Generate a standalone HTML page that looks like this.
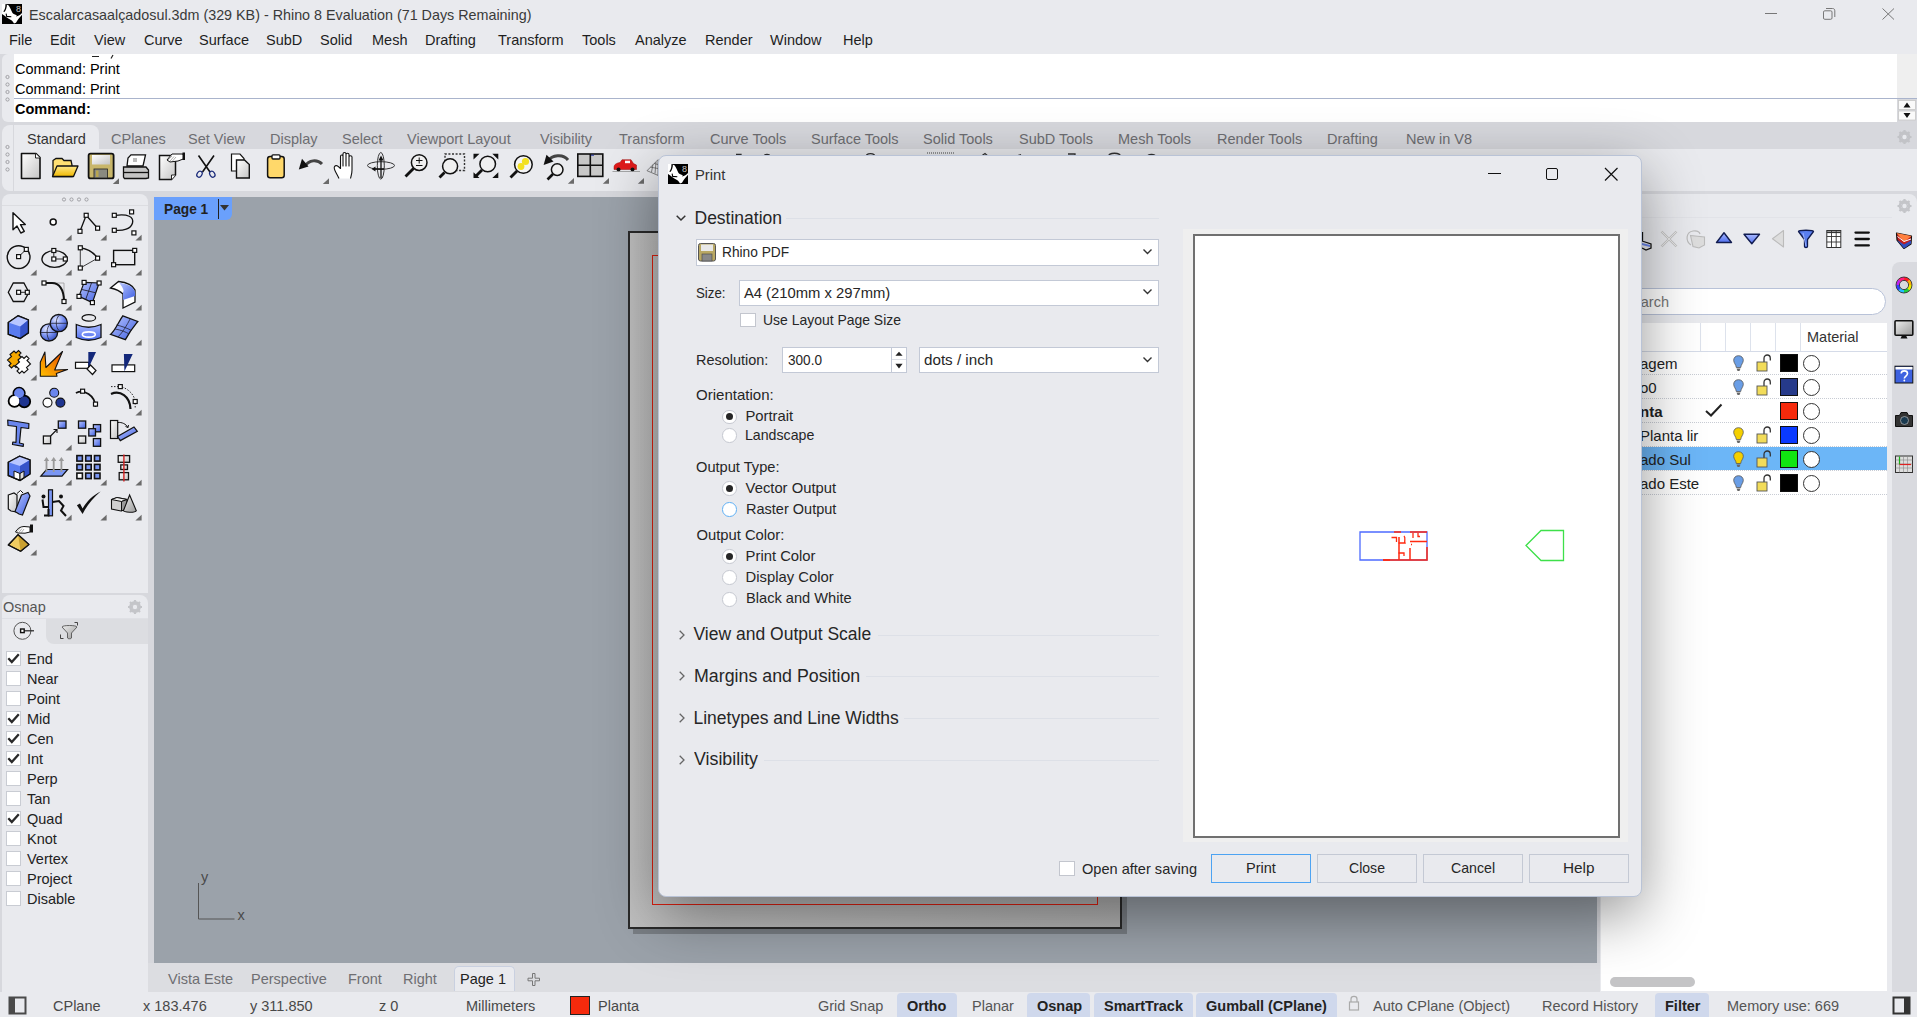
<!DOCTYPE html>
<html><head><meta charset="utf-8">
<style>
*{margin:0;padding:0;box-sizing:border-box}
html,body{width:1917px;height:1017px;overflow:hidden}
body{position:relative;background:#d7d8dd;font-family:"Liberation Sans",sans-serif;color:#1e1e1e;font-size:14.5px}
.a{position:absolute}
.t{position:absolute;white-space:nowrap;line-height:1}
.g{color:#6e6e72}
.b{font-weight:bold}
svg{position:absolute;overflow:visible}
</style></head><body>

<!-- ===== TITLE + MENU ===== -->
<div class="a" style="left:0;top:0;width:1917px;height:54px;background:#e9eaee"></div>
<div class="t" style="left:29px;top:8px;color:#3a3a3a;transform:scaleX(0.988);transform-origin:0 0">Escalarcasaalçadosul.3dm (329 KB) - Rhino 8 Evaluation (71 Days Remaining)</div>
<div id="menu">
<div class="t" style="left:9px;top:33px">File</div>
<div class="t" style="left:50px;top:33px">Edit</div>
<div class="t" style="left:94px;top:33px">View</div>
<div class="t" style="left:144px;top:33px">Curve</div>
<div class="t" style="left:199px;top:33px">Surface</div>
<div class="t" style="left:266px;top:33px">SubD</div>
<div class="t" style="left:320px;top:33px">Solid</div>
<div class="t" style="left:372px;top:33px">Mesh</div>
<div class="t" style="left:425px;top:33px">Drafting</div>
<div class="t" style="left:498px;top:33px">Transform</div>
<div class="t" style="left:582px;top:33px">Tools</div>
<div class="t" style="left:635px;top:33px">Analyze</div>
<div class="t" style="left:705px;top:33px">Render</div>
<div class="t" style="left:770px;top:33px">Window</div>
<div class="t" style="left:843px;top:33px">Help</div>
</div>

<!-- ===== COMMAND AREA ===== -->
<div class="a" style="left:2px;top:54px;width:14px;height:68px;background:#e9eaee;border-radius:6px 0 0 6px"></div>
<div class="a" style="left:14px;top:54px;width:1883px;height:68px;background:#fff"></div>
<div class="a" style="left:1897px;top:54px;width:20px;height:45px;background:#efefef"></div>
<div class="a" style="left:14px;top:98px;width:1903px;height:1px;background:#aab4cc"></div>
<div class="t" style="left:15px;top:62px;color:#000">Command: Print</div>
<div class="t" style="left:15px;top:82px;color:#000">Command: Print</div>
<div class="t b" style="left:15px;top:102px;color:#000">Command:</div>

<!-- ===== TOOLBAR ===== -->
<div class="a" style="left:2px;top:125px;width:1915px;height:66px;background:#e9eaee;border-radius:8px 0 0 8px"></div>
<div class="a" style="left:91px;top:125px;width:1826px;height:24px;background:#d7d8dd"></div>
<div class="a" style="left:14px;top:125px;width:85px;height:24px;background:#e9eaee;border-radius:0 8px 0 0"></div>
<div class="a" style="left:13px;top:125px;width:1px;height:66px;background:#d7d8dd"></div>
<div id="tabs">
<div class="t" style="left:27px;top:132px;color:#333">Standard</div>
<div class="t g" style="left:111px;top:132px">CPlanes</div>
<div class="t g" style="left:188px;top:132px">Set View</div>
<div class="t g" style="left:270px;top:132px">Display</div>
<div class="t g" style="left:342px;top:132px">Select</div>
<div class="t g" style="left:407px;top:132px">Viewport Layout</div>
<div class="t g" style="left:540px;top:132px">Visibility</div>
<div class="t g" style="left:619px;top:132px">Transform</div>
<div class="t g" style="left:710px;top:132px">Curve Tools</div>
<div class="t g" style="left:811px;top:132px">Surface Tools</div>
<div class="t g" style="left:923px;top:132px">Solid Tools</div>
<div class="t g" style="left:1019px;top:132px">SubD Tools</div>
<div class="t g" style="left:1118px;top:132px">Mesh Tools</div>
<div class="t g" style="left:1217px;top:132px">Render Tools</div>
<div class="t g" style="left:1327px;top:132px">Drafting</div>
<div class="t g" style="left:1406px;top:132px">New in V8</div>
</div>

<!-- ===== LEFT PANELS ===== -->
<div class="a" style="left:2px;top:194px;width:146px;height:399px;background:#e9eaee;border-radius:8px 8px 0 0"></div>
<div class="a" style="left:2px;top:205px;width:146px;height:1px;background:#dcdde1"></div>
<div class="a" style="left:2px;top:595px;width:146px;height:397px;background:#e9eaee;border-radius:8px 8px 0 0"></div>
<div class="t" style="left:3px;top:599.5px;color:#555">Osnap</div>
<div class="a" style="left:2px;top:618px;width:146px;height:1px;background:#dfe0e5"></div>
<div class="a" style="left:2px;top:619px;width:46px;height:25px;background:#e9eaee;border-radius:0 8px 0 0"></div>
<div class="a" style="left:46px;top:619px;width:102px;height:25px;background:#dcdde1;border-radius:0 0 0 8px"></div>
<div id="osnap">
<div class="a" style="left:6px;top:651px;width:15px;height:15px;background:#fff;border:1px solid #c9ccd3"></div>
<svg style="left:6px;top:651px" width="15" height="15"><path d="M2.3 7.2L5.8 11L12.8 3.2" fill="none" stroke="#2a2a2a" stroke-width="2.3"/></svg>
<div class="t" style="left:27px;top:652px;color:#222">End</div>
<div class="a" style="left:6px;top:671px;width:15px;height:15px;background:#fff;border:1px solid #c9ccd3"></div>
<div class="t" style="left:27px;top:672px;color:#222">Near</div>
<div class="a" style="left:6px;top:691px;width:15px;height:15px;background:#fff;border:1px solid #c9ccd3"></div>
<div class="t" style="left:27px;top:692px;color:#222">Point</div>
<div class="a" style="left:6px;top:711px;width:15px;height:15px;background:#fff;border:1px solid #c9ccd3"></div>
<svg style="left:6px;top:711px" width="15" height="15"><path d="M2.3 7.2L5.8 11L12.8 3.2" fill="none" stroke="#2a2a2a" stroke-width="2.3"/></svg>
<div class="t" style="left:27px;top:712px;color:#222">Mid</div>
<div class="a" style="left:6px;top:731px;width:15px;height:15px;background:#fff;border:1px solid #c9ccd3"></div>
<svg style="left:6px;top:731px" width="15" height="15"><path d="M2.3 7.2L5.8 11L12.8 3.2" fill="none" stroke="#2a2a2a" stroke-width="2.3"/></svg>
<div class="t" style="left:27px;top:732px;color:#222">Cen</div>
<div class="a" style="left:6px;top:751px;width:15px;height:15px;background:#fff;border:1px solid #c9ccd3"></div>
<svg style="left:6px;top:751px" width="15" height="15"><path d="M2.3 7.2L5.8 11L12.8 3.2" fill="none" stroke="#2a2a2a" stroke-width="2.3"/></svg>
<div class="t" style="left:27px;top:752px;color:#222">Int</div>
<div class="a" style="left:6px;top:771px;width:15px;height:15px;background:#fff;border:1px solid #c9ccd3"></div>
<div class="t" style="left:27px;top:772px;color:#222">Perp</div>
<div class="a" style="left:6px;top:791px;width:15px;height:15px;background:#fff;border:1px solid #c9ccd3"></div>
<div class="t" style="left:27px;top:792px;color:#222">Tan</div>
<div class="a" style="left:6px;top:811px;width:15px;height:15px;background:#fff;border:1px solid #c9ccd3"></div>
<svg style="left:6px;top:811px" width="15" height="15"><path d="M2.3 7.2L5.8 11L12.8 3.2" fill="none" stroke="#2a2a2a" stroke-width="2.3"/></svg>
<div class="t" style="left:27px;top:812px;color:#222">Quad</div>
<div class="a" style="left:6px;top:831px;width:15px;height:15px;background:#fff;border:1px solid #c9ccd3"></div>
<div class="t" style="left:27px;top:832px;color:#222">Knot</div>
<div class="a" style="left:6px;top:851px;width:15px;height:15px;background:#fff;border:1px solid #c9ccd3"></div>
<div class="t" style="left:27px;top:852px;color:#222">Vertex</div>
<div class="a" style="left:6px;top:871px;width:15px;height:15px;background:#fff;border:1px solid #c9ccd3"></div>
<div class="t" style="left:27px;top:872px;color:#222">Project</div>
<div class="a" style="left:6px;top:891px;width:15px;height:15px;background:#fff;border:1px solid #c9ccd3"></div>
<div class="t" style="left:27px;top:892px;color:#222">Disable</div>
</div>

<!-- ===== VIEWPORT ===== -->
<div class="a" style="left:154px;top:197px;width:1443px;height:766px;background:#9ba2aa;overflow:hidden">
  <div class="a" style="left:474px;top:34px;width:494px;height:698px;background:linear-gradient(90deg,#c0c0c0,#b2b2b2);border:2px solid #2a2a2a;box-shadow:5px 5px 0 rgba(0,0,0,0.22)"></div>
  <div class="a" style="left:498px;top:58px;width:446px;height:650px;border:1px solid #e02010"></div>
</div>
<div class="a" style="left:154px;top:197px;width:78px;height:23px;background:#6aa0fc;border-radius:0 0 6px 0"></div>
<div class="t b" style="left:163.5px;top:201px;color:#222;font-size:15px;transform:scaleX(0.915);transform-origin:0 0">Page 1</div>

<!-- viewport tab strip -->
<div class="a" style="left:148px;top:963px;width:1452px;height:29px;background:#dcdde1"></div>
<div class="a" style="left:454px;top:966px;width:61px;height:25px;background:#e9eaee;border-radius:5px 5px 0 0;border:1px solid #c9d0e0;border-bottom:none"></div>
<div class="t g" style="left:168px;top:972px">Vista Este</div>
<div class="t g" style="left:251px;top:972px">Perspective</div>
<div class="t g" style="left:348px;top:972px">Front</div>
<div class="t g" style="left:403px;top:972px">Right</div>
<div class="t" style="left:460px;top:972px;color:#222">Page 1</div>

<!-- ===== STATUS BAR ===== -->
<div class="a" style="left:0;top:992px;width:1917px;height:25px;background:#e9eaee"></div>
<div id="status">
<div class="t" style="left:53px;top:999px;color:#484848">CPlane</div>
<div class="t" style="left:143px;top:999px;color:#484848">x 183.476</div>
<div class="t" style="left:250px;top:999px;color:#484848">y 311.850</div>
<div class="t" style="left:379px;top:999px;color:#484848">z 0</div>
<div class="t" style="left:466px;top:999px;color:#484848">Millimeters</div>
<div class="a" style="left:570px;top:996px;width:20px;height:19px;background:#f52a0c;border:1px solid #222"></div>
<div class="t" style="left:598px;top:999px;color:#484848">Planta</div>
<div class="t" style="left:818px;top:999px;color:#555">Grid Snap</div>
<div class="a" style="left:897px;top:993px;width:60px;height:24px;background:#cfd8ec;border-radius:4px 4px 0 0"></div>
<div class="t b" style="left:907px;top:999px;color:#222">Ortho</div>
<div class="t" style="left:972px;top:999px;color:#555">Planar</div>
<div class="a" style="left:1027px;top:993px;width:63px;height:24px;background:#cfd8ec;border-radius:4px 4px 0 0"></div>
<div class="t b" style="left:1037px;top:999px;color:#222">Osnap</div>
<div class="a" style="left:1094px;top:993px;width:99px;height:24px;background:#cfd8ec;border-radius:4px 4px 0 0"></div>
<div class="t b" style="left:1104px;top:999px;color:#222">SmartTrack</div>
<div class="a" style="left:1196px;top:993px;width:141px;height:24px;background:#cfd8ec;border-radius:4px 4px 0 0"></div>
<div class="t b" style="left:1206px;top:999px;color:#222">Gumball (CPlane)</div>
<div class="t" style="left:1373px;top:999px;color:#555">Auto CPlane (Object)</div>
<div class="t" style="left:1542px;top:999px;color:#555">Record History</div>
<div class="a" style="left:1655px;top:993px;width:54px;height:24px;background:#cfd8ec;border-radius:4px 4px 0 0"></div>
<div class="t b" style="left:1665px;top:999px;color:#222">Filter</div>
<div class="t" style="left:1727px;top:999px;color:#555">Memory use: 669</div>
</div>

<!-- ===== RIGHT PANEL ===== -->
<div class="a" style="left:1600px;top:194px;width:317px;height:798px;background:#e9eaee;border-radius:8px 8px 0 0"></div>
<div class="a" style="left:1600px;top:217px;width:317px;height:1px;background:#e2e3e8"></div>
<div class="a" style="left:1892px;top:262px;width:25px;height:730px;background:#d9dadf;border-radius:8px 0 0 0"></div>
<div class="a" style="left:1892px;top:217px;width:25px;height:45px;background:#e9eaee;border-radius:0 0 8px 0"></div>
<div class="a" style="left:1601px;top:288px;width:285px;height:27px;background:#fff;border:1px solid #b8c2d8;border-radius:14px"></div>
<div class="t" style="left:1623px;top:295px;color:#777">Search</div>
<div class="a" style="left:1601px;top:323px;width:286px;height:668px;background:#fff"></div>
<div class="a" style="left:1601px;top:351px;width:286px;height:1px;background:#d5dbe8"></div>
<div class="a" style="left:1700px;top:323px;width:1px;height:28px;background:#dde2ec"></div>
<div class="a" style="left:1725px;top:323px;width:1px;height:28px;background:#dde2ec"></div>
<div class="a" style="left:1750px;top:323px;width:1px;height:28px;background:#dde2ec"></div>
<div class="a" style="left:1775px;top:323px;width:1px;height:28px;background:#dde2ec"></div>
<div class="a" style="left:1800px;top:323px;width:1px;height:28px;background:#dde2ec"></div>
<div class="t" style="left:1807px;top:330px;color:#333">Material</div>
<div class="a" style="left:1601px;top:374px;width:286px;height:1px;border-top:1px dotted #c8ccd4"></div>
<div class="t" style="left:1640px;top:356px;color:#222;font-size:15px">agem</div>
<div class="a" style="left:1780px;top:354px;width:18px;height:18px;background:#000;border:1.5px solid #111"></div>
<div class="a" style="left:1803px;top:355px;width:17px;height:17px;border-radius:50%;background:#fff;border:1.2px solid #333"></div>
<svg style="left:1733px;top:355px" width="11" height="17"><path d="M5.5 0.7C2.5 0.7 0.7 2.8 0.7 5.3C0.7 8 3 9.5 3.3 12.5H7.7C8 9.5 10.3 8 10.3 5.3C10.3 2.8 8.5 0.7 5.5 0.7Z" fill="#6a9ee6" stroke="#555" stroke-width="0.8"/><path d="M3.5 13.5H7.5L6.5 16H4.5Z" fill="#666"/></svg>
<svg style="left:1756px;top:354px" width="16" height="18"><path d="M8 8V4.5C8 2.5 9.5 1 11.2 1C13 1 14.3 2.5 14.3 4.5V6.5" fill="none" stroke="#333" stroke-width="1.3"/><rect x="1" y="8" width="10" height="9" fill="#f2dc5a" stroke="#555" stroke-width="0.9"/></svg>
<div class="a" style="left:1601px;top:398px;width:286px;height:1px;border-top:1px dotted #c8ccd4"></div>
<div class="t" style="left:1640px;top:380px;color:#222;font-size:15px">o0</div>
<div class="a" style="left:1780px;top:378px;width:18px;height:18px;background:#263a8a;border:1.5px solid #111"></div>
<div class="a" style="left:1803px;top:379px;width:17px;height:17px;border-radius:50%;background:#fff;border:1.2px solid #333"></div>
<svg style="left:1733px;top:379px" width="11" height="17"><path d="M5.5 0.7C2.5 0.7 0.7 2.8 0.7 5.3C0.7 8 3 9.5 3.3 12.5H7.7C8 9.5 10.3 8 10.3 5.3C10.3 2.8 8.5 0.7 5.5 0.7Z" fill="#6a9ee6" stroke="#555" stroke-width="0.8"/><path d="M3.5 13.5H7.5L6.5 16H4.5Z" fill="#666"/></svg>
<svg style="left:1756px;top:378px" width="16" height="18"><path d="M8 8V4.5C8 2.5 9.5 1 11.2 1C13 1 14.3 2.5 14.3 4.5V6.5" fill="none" stroke="#333" stroke-width="1.3"/><rect x="1" y="8" width="10" height="9" fill="#f2dc5a" stroke="#555" stroke-width="0.9"/></svg>
<div class="a" style="left:1601px;top:422px;width:286px;height:1px;border-top:1px dotted #c8ccd4"></div>
<div class="t b" style="left:1640px;top:404px;color:#222;font-size:15px">nta</div>
<div class="a" style="left:1780px;top:402px;width:18px;height:18px;background:#f52a0c;border:1.5px solid #111"></div>
<div class="a" style="left:1803px;top:403px;width:17px;height:17px;border-radius:50%;background:#fff;border:1.2px solid #333"></div>
<div class="a" style="left:1601px;top:446px;width:286px;height:1px;border-top:1px dotted #c8ccd4"></div>
<div class="t" style="left:1640px;top:428px;color:#222;font-size:15px"> Planta lir</div>
<div class="a" style="left:1780px;top:426px;width:18px;height:18px;background:#0a3aff;border:1.5px solid #111"></div>
<div class="a" style="left:1803px;top:427px;width:17px;height:17px;border-radius:50%;background:#fff;border:1.2px solid #333"></div>
<svg style="left:1733px;top:427px" width="11" height="17"><path d="M5.5 0.7C2.5 0.7 0.7 2.8 0.7 5.3C0.7 8 3 9.5 3.3 12.5H7.7C8 9.5 10.3 8 10.3 5.3C10.3 2.8 8.5 0.7 5.5 0.7Z" fill="#f5d000" stroke="#555" stroke-width="0.8"/><path d="M3.5 13.5H7.5L6.5 16H4.5Z" fill="#666"/></svg>
<svg style="left:1756px;top:426px" width="16" height="18"><path d="M8 8V4.5C8 2.5 9.5 1 11.2 1C13 1 14.3 2.5 14.3 4.5V6.5" fill="none" stroke="#333" stroke-width="1.3"/><rect x="1" y="8" width="10" height="9" fill="#f2dc5a" stroke="#555" stroke-width="0.9"/></svg>
<div class="a" style="left:1601px;top:447px;width:286px;height:23px;background:#6cb6f7"></div>
<div class="a" style="left:1601px;top:470px;width:286px;height:1px;border-top:1px dotted #c8ccd4"></div>
<div class="t" style="left:1640px;top:452px;color:#222;font-size:15px">ado Sul</div>
<div class="a" style="left:1780px;top:450px;width:18px;height:18px;background:#11e611;border:1.5px solid #111"></div>
<div class="a" style="left:1803px;top:451px;width:17px;height:17px;border-radius:50%;background:#fff;border:1.2px solid #333"></div>
<svg style="left:1733px;top:451px" width="11" height="17"><path d="M5.5 0.7C2.5 0.7 0.7 2.8 0.7 5.3C0.7 8 3 9.5 3.3 12.5H7.7C8 9.5 10.3 8 10.3 5.3C10.3 2.8 8.5 0.7 5.5 0.7Z" fill="#f5d000" stroke="#555" stroke-width="0.8"/><path d="M3.5 13.5H7.5L6.5 16H4.5Z" fill="#666"/></svg>
<svg style="left:1756px;top:450px" width="16" height="18"><path d="M8 8V4.5C8 2.5 9.5 1 11.2 1C13 1 14.3 2.5 14.3 4.5V6.5" fill="none" stroke="#333" stroke-width="1.3"/><rect x="1" y="8" width="10" height="9" fill="#f2dc5a" stroke="#555" stroke-width="0.9"/></svg>
<div class="a" style="left:1601px;top:494px;width:286px;height:1px;border-top:1px dotted #c8ccd4"></div>
<div class="t" style="left:1640px;top:476px;color:#222;font-size:15px">ado Este</div>
<div class="a" style="left:1780px;top:474px;width:18px;height:18px;background:#000;border:1.5px solid #111"></div>
<div class="a" style="left:1803px;top:475px;width:17px;height:17px;border-radius:50%;background:#fff;border:1.2px solid #333"></div>
<svg style="left:1733px;top:475px" width="11" height="17"><path d="M5.5 0.7C2.5 0.7 0.7 2.8 0.7 5.3C0.7 8 3 9.5 3.3 12.5H7.7C8 9.5 10.3 8 10.3 5.3C10.3 2.8 8.5 0.7 5.5 0.7Z" fill="#6a9ee6" stroke="#555" stroke-width="0.8"/><path d="M3.5 13.5H7.5L6.5 16H4.5Z" fill="#666"/></svg>
<svg style="left:1756px;top:474px" width="16" height="18"><path d="M8 8V4.5C8 2.5 9.5 1 11.2 1C13 1 14.3 2.5 14.3 4.5V6.5" fill="none" stroke="#333" stroke-width="1.3"/><rect x="1" y="8" width="10" height="9" fill="#f2dc5a" stroke="#555" stroke-width="0.9"/></svg>
<svg style="left:1704.5px;top:403px" width="18" height="14"><path d="M1 8L6 12.5L16.5 1.5" fill="none" stroke="#222" stroke-width="2"/></svg>
<div class="a" style="left:1610px;top:977px;width:85px;height:10px;background:#c4c4c6;border-radius:5px"></div>

<!-- MISC -->
<svg id="misc" style="left:0;top:0" width="1917" height="1017"><g transform="translate(2,4) scale(1.0)"><rect x="0" y="0" width="20" height="20" fill="#fff"/><path d="M3.3 0H20V9C18.5 11 16.5 12 14 12.6L14.8 11.2C13 10.8 11.5 10 10.5 9C9.5 7 8 3 6.2 1L4.6 0.8Z" fill="#000"/><path d="M3.4 0.3C3.6 3 2.9 5.5 1.3 7.6L2.4 8.1C4.1 6 4.9 3 4.9 0.5Z" fill="#000"/><path d="M0 10C3 12 6 14.5 9 16C10.5 17 11.5 18.5 12 19.5L14 18.7C16 15 18 13 20 10.8V20H0Z" fill="#000"/><path d="M4.1 9.6L4.7 12.4L9.3 12.8" fill="none" stroke="#000" stroke-width="1.1"/><text x="16.4" y="8.4" font-size="9" font-family="Liberation Sans" fill="#c8c8c8" text-anchor="middle">8</text></g><path d="M1765 13.5H1777" stroke="#777" stroke-width="1"/><rect x="1823.5" y="10.8" width="8.5" height="8.5" rx="1.3" fill="none" stroke="#777" stroke-width="1"/><path d="M1826 8.5H1832.5C1834 8.5 1834.8 9.3 1834.8 10.8V17" fill="none" stroke="#777" stroke-width="1"/><path d="M1882.5 8.5L1894 19.5M1894 8.5L1882.5 19.5" stroke="#777" stroke-width="1"/><circle cx="7.5" cy="77" r="1.6" fill="none" stroke="#9a9a9e" stroke-width="0.9"/><circle cx="7.5" cy="84.5" r="1.6" fill="none" stroke="#9a9a9e" stroke-width="0.9"/><circle cx="7.5" cy="92" r="1.6" fill="none" stroke="#9a9a9e" stroke-width="0.9"/><circle cx="7.5" cy="99.5" r="1.6" fill="none" stroke="#9a9a9e" stroke-width="0.9"/><circle cx="7.5" cy="147" r="1.6" fill="none" stroke="#9a9a9e" stroke-width="0.9"/><circle cx="7.5" cy="154.5" r="1.6" fill="none" stroke="#9a9a9e" stroke-width="0.9"/><circle cx="7.5" cy="162" r="1.6" fill="none" stroke="#9a9a9e" stroke-width="0.9"/><circle cx="7.5" cy="169.5" r="1.6" fill="none" stroke="#9a9a9e" stroke-width="0.9"/><circle cx="64" cy="199.5" r="1.6" fill="none" stroke="#9a9a9e" stroke-width="0.9"/><circle cx="71.5" cy="199.5" r="1.6" fill="none" stroke="#9a9a9e" stroke-width="0.9"/><circle cx="79" cy="199.5" r="1.6" fill="none" stroke="#9a9a9e" stroke-width="0.9"/><circle cx="86.5" cy="199.5" r="1.6" fill="none" stroke="#9a9a9e" stroke-width="0.9"/><rect x="1898.5" y="100.5" width="17" height="9" fill="#fafafa" stroke="#c8c8c8" stroke-width="0.8"/><rect x="1898.5" y="111" width="17" height="9" fill="#fafafa" stroke="#c8c8c8" stroke-width="0.8"/><path d="M1903.5 107.5L1907 102.5L1910.5 107.5Z M1903.5 113L1907 118L1910.5 113Z" fill="#111"/><g transform="translate(1904.5,137)"><circle r="4.6" fill="none" stroke="#c2c3c7" stroke-width="2.6"/><path d="M0 -7V7M-7 0H7M-5 -5L5 5M5 -5L-5 5" stroke="#c2c3c7" stroke-width="2.2"/><circle r="2.2" fill="#e9eaee"/></g><g transform="translate(1904.5,206)"><circle r="4.6" fill="none" stroke="#c4c5c9" stroke-width="2.6"/><path d="M0 -7V7M-7 0H7M-5 -5L5 5M5 -5L-5 5" stroke="#c4c5c9" stroke-width="2.2"/><circle r="2.2" fill="#e9eaee"/></g><g transform="translate(135,607)"><circle r="4.6" fill="none" stroke="#c4c5c9" stroke-width="2.6"/><path d="M0 -7V7M-7 0H7M-5 -5L5 5M5 -5L-5 5" stroke="#c4c5c9" stroke-width="2.2"/><circle r="2.2" fill="#e9eaee"/></g><path d="M92 56.5H99M113 55L111 58.5" stroke="#222" stroke-width="1.2"/><path d="M218.5 199V219" stroke="#222" stroke-width="1"/><path d="M220 205H229L224.5 210.5Z" fill="#333"/><path d="M198.5 883V919H234.5" fill="none" stroke="#555" stroke-width="1"/><text x="201" y="882" font-size="14.5" font-family="Liberation Sans" fill="#4a4a4a">y</text><text x="237.5" y="920" font-size="14.5" font-family="Liberation Sans" fill="#4a4a4a">x</text><path d="M532.5 973.5H535V978.2H539.5V980.8H535V985.5H532.5V980.8H528V978.2H532.5Z" fill="none" stroke="#777" stroke-width="1"/><rect x="9.5" y="997.5" width="16" height="16" fill="none" stroke="#4a4a4a" stroke-width="2"/><rect x="10" y="998" width="5" height="15" fill="#4a4a4a"/><rect x="1893.5" y="997.5" width="16" height="16" fill="none" stroke="#333" stroke-width="2"/><rect x="1904" y="998" width="5" height="15" fill="#333"/><path d="M1351 1002V999C1351 995.5 1357 995.5 1357 999V1002" fill="none" stroke="#aaa" stroke-width="1.2"/><rect x="1349.5" y="1002" width="9" height="8" fill="none" stroke="#aaa" stroke-width="1.2"/><circle cx="22.4" cy="630.8" r="8.5" fill="none" stroke="#555" stroke-width="1"/><path d="M22.4 630.8H34" stroke="#222" stroke-width="1.2"/><rect x="20.6" y="629" width="3.6" height="3.6" fill="#fff" stroke="#111" stroke-width="1.4"/><path d="M62 627C62 625 77 625 77 627L71.5 633V638C71.5 639 67.5 639 67.5 638V633Z" fill="url(#gGray)" stroke="#555" stroke-width="0.9"/><path d="M60.5 634.5V638.5H63.5M74.5 622.5H77.5V625.5" fill="none" stroke="#333" stroke-width="0.9"/></svg>
<!-- /MISC -->
<!-- ICONS -->
<svg id="icons" style="left:0;top:0" width="1917" height="1017"><defs>
<linearGradient id="gBlue" x1="0" y1="0" x2="1" y2="1"><stop offset="0" stop-color="#b9c6ff"/><stop offset="1" stop-color="#3f5fe0"/></linearGradient>
<linearGradient id="gBlueV" x1="0" y1="0" x2="0" y2="1"><stop offset="0" stop-color="#a8b8ff"/><stop offset="1" stop-color="#5070ee"/></linearGradient>
<radialGradient id="gSph" cx="0.35" cy="0.3" r="0.8"><stop offset="0" stop-color="#e4e9ff"/><stop offset="0.5" stop-color="#7a92f2"/><stop offset="1" stop-color="#2b45b8"/></radialGradient>
<linearGradient id="gWhite" x1="0" y1="0" x2="1" y2="1"><stop offset="0" stop-color="#ffffff"/><stop offset="1" stop-color="#c4c4c4"/></linearGradient>
<linearGradient id="gFold" x1="0" y1="0" x2="0" y2="1"><stop offset="0" stop-color="#ffe98a"/><stop offset="1" stop-color="#f0b800"/></linearGradient>
<linearGradient id="gOrange" x1="0" y1="1" x2="1" y2="0"><stop offset="0" stop-color="#ffc000"/><stop offset="1" stop-color="#e84000"/></linearGradient>
<linearGradient id="gGray" x1="0" y1="0" x2="1" y2="1"><stop offset="0" stop-color="#eeeeee"/><stop offset="1" stop-color="#9a9a9a"/></linearGradient>
<linearGradient id="gGold" x1="0" y1="0" x2="1" y2="1"><stop offset="0" stop-color="#f6dc80"/><stop offset="1" stop-color="#c8a030"/></linearGradient>
</defs><defs><linearGradient id="gWheel" x1="0" y1="0" x2="1" y2="1"><stop offset="0" stop-color="#ff3030"/><stop offset="0.25" stop-color="#ffd000"/><stop offset="0.5" stop-color="#30d030"/><stop offset="0.75" stop-color="#3070ff"/><stop offset="1" stop-color="#d030d0"/></linearGradient></defs><g transform="translate(6,210)"><path d="M7 2.7L7 19.8L11 16L14.8 23L18.3 21.3L14.5 14.6L19.3 14.6Z" fill="#fff" stroke="#111" stroke-width="1.4" stroke-linejoin="round"/></g><g transform="translate(41,210)"><circle cx="12.2" cy="12" r="3" fill="#fff" stroke="#111" stroke-width="1.5"/></g><path d="M65.39999999999999 240.6L71.6 240.6L71.6 234.79999999999998Z" fill="#6b6b6b"/><g transform="translate(76,210)"><path d="M4 21.3L10.2 5.3L21.6 18.2" fill="none" stroke="#111" stroke-width="1.3"/><rect x="2.0" y="19.3" width="4" height="4" fill="#fff" stroke="#111" stroke-width="1.2"/><rect x="8.2" y="3.3" width="4" height="4" fill="#fff" stroke="#111" stroke-width="1.2"/><rect x="19.6" y="16.2" width="4" height="4" fill="#fff" stroke="#111" stroke-width="1.2"/></g><path d="M100.39999999999999 240.6L106.6 240.6L106.6 234.79999999999998Z" fill="#6b6b6b"/><g transform="translate(111,210)"><path d="M4 5.4C17 3.5 23 7 21.5 13C20 19 12 21 4 20.3" fill="none" stroke="#111" stroke-width="1.3"/><rect x="1.2999999999999998" y="3.3" width="4" height="4" fill="#fff" stroke="#111" stroke-width="1.2"/><rect x="1.2999999999999998" y="18.3" width="4" height="4" fill="#fff" stroke="#111" stroke-width="1.2"/><rect x="18.6" y="-0.10000000000000009" width="4" height="4" fill="#fff" stroke="#111" stroke-width="1.2"/><rect x="20.9" y="20.9" width="4" height="4" fill="#fff" stroke="#111" stroke-width="1.2"/></g><path d="M135.4 240.6L141.6 240.6L141.6 234.79999999999998Z" fill="#6b6b6b"/><g transform="translate(6,245)"><circle cx="12.6" cy="12.1" r="11.4" fill="none" stroke="#111" stroke-width="1.4"/><path d="M12.6 11.6L20.3 4.4" stroke="#111" stroke-width="0.9"/><rect x="10.6" y="9.6" width="4" height="4" fill="#fff" stroke="#111" stroke-width="1.2"/><rect x="18.3" y="2.4000000000000004" width="4" height="4" fill="#fff" stroke="#111" stroke-width="1.2"/></g><path d="M30.400000000000002 275.6L36.6 275.6L36.6 269.8Z" fill="#6b6b6b"/><g transform="translate(41,245)"><ellipse cx="13.5" cy="14" rx="12.6" ry="8.4" fill="none" stroke="#111" stroke-width="1.4"/><path d="M12.8 5.5V14H24.3" fill="none" stroke="#111" stroke-width="0.9"/><rect x="10.8" y="3.5" width="4" height="4" fill="#fff" stroke="#111" stroke-width="1.2"/><rect x="10.8" y="12.0" width="4" height="4" fill="#fff" stroke="#111" stroke-width="1.2"/><rect x="22.3" y="12.0" width="4" height="4" fill="#fff" stroke="#111" stroke-width="1.2"/></g><path d="M65.39999999999999 275.6L71.6 275.6L71.6 269.8Z" fill="#6b6b6b"/><g transform="translate(76,245)"><path d="M4.3 2.8V23L21.6 13.2" fill="none" stroke="#111" stroke-width="0.8"/><path d="M4.3 2.8C12 4 18 8 21.6 13.2" fill="none" stroke="#111" stroke-width="1.4"/><rect x="2.3" y="0.7999999999999998" width="4" height="4" fill="#fff" stroke="#111" stroke-width="1.2"/><rect x="2.3" y="21.0" width="4" height="4" fill="#fff" stroke="#111" stroke-width="1.2"/><rect x="19.6" y="11.2" width="4" height="4" fill="#fff" stroke="#111" stroke-width="1.2"/></g><path d="M100.39999999999999 275.6L106.6 275.6L106.6 269.8Z" fill="#6b6b6b"/><g transform="translate(111,245)"><rect x="2.6" y="5.4" width="21.1" height="14.3" fill="none" stroke="#111" stroke-width="1.4"/><rect x="0.6000000000000001" y="17.7" width="4" height="4" fill="#fff" stroke="#111" stroke-width="1.2"/><rect x="21.7" y="3.4000000000000004" width="4" height="4" fill="#fff" stroke="#111" stroke-width="1.2"/></g><path d="M135.4 275.6L141.6 275.6L141.6 269.8Z" fill="#6b6b6b"/><g transform="translate(6,280)"><path d="M2.3 12.3L7.3 3H17.9L22.9 12.3L17.9 21.5H7.3Z" fill="none" stroke="#111" stroke-width="1.3"/><path d="M12.6 12.3H21.3" stroke="#111" stroke-width="0.9"/><rect x="10.6" y="10.3" width="4" height="4" fill="#fff" stroke="#111" stroke-width="1.2"/><rect x="19.3" y="10.3" width="4" height="4" fill="#fff" stroke="#111" stroke-width="1.2"/></g><path d="M30.400000000000002 310.6L36.6 310.6L36.6 304.8Z" fill="#6b6b6b"/><g transform="translate(41,280)"><path d="M23 3V21.5M3 3H23" stroke="#999" stroke-width="0.8" fill="none"/><path d="M3 3H11C18 3 23 9 23 21.5" fill="none" stroke="#111" stroke-width="2"/><rect x="1.0" y="1.0" width="4" height="4" fill="#fff" stroke="#111" stroke-width="1.2"/><rect x="21.0" y="19.5" width="4" height="4" fill="#fff" stroke="#111" stroke-width="1.2"/></g><path d="M65.39999999999999 310.6L71.6 310.6L71.6 304.8Z" fill="#6b6b6b"/><g transform="translate(76,280)"><path d="M8.1 2.4L23.1 3L16.4 22.6L3 16.4Z" fill="url(#gBlue)" stroke="#111" stroke-width="1.2"/><path d="M15.6 2.7L9.7 19.5M5.5 9.4L19.7 12.8" stroke="#223" stroke-width="0.9"/><rect x="6.1" y="0.3999999999999999" width="4" height="4" fill="#fff" stroke="#111" stroke-width="1.2"/><rect x="21.1" y="1.0" width="4" height="4" fill="#fff" stroke="#111" stroke-width="1.2"/><rect x="14.399999999999999" y="20.6" width="4" height="4" fill="#fff" stroke="#111" stroke-width="1.2"/><rect x="1.0" y="14.399999999999999" width="4" height="4" fill="#fff" stroke="#111" stroke-width="1.2"/></g><path d="M100.39999999999999 310.6L106.6 310.6L106.6 304.8Z" fill="#6b6b6b"/><g transform="translate(111,280)"><path d="M-0.5 8L7.5 1.5C12 2 21 3.5 24 10V22L12 28V14C9 11 4 9 -0.5 8Z" fill="#fff" stroke="#111" stroke-width="1.3"/><path d="M8 2.5C14 4 22 5 24 12L24 16L12 20L12 12C14 11 10 5 8 2.5Z" fill="url(#gBlue)"/></g><path d="M135.4 310.6L141.6 310.6L141.6 304.8Z" fill="#6b6b6b"/><g transform="translate(6,315)"><path d="M2.3 7.5L12.1 0.8L22.4 5L22.4 17.9L14.1 23.5L2.3 19.4Z" fill="#5a7cf0" stroke="#111" stroke-width="1.3"/><path d="M2.3 7.5L14.3 11.5L22.4 5L12.1 0.8Z" fill="#b8c6ff"/><path d="M14.3 11.5L22.4 5L22.4 17.9L14.1 23.5Z" fill="#3553c9"/><path d="M2.3 7.5L12.1 0.8L22.4 5L22.4 17.9L14.1 23.5L2.3 19.4Z" fill="none" stroke="#111" stroke-width="1.3"/></g><path d="M30.400000000000002 345.6L36.6 345.6L36.6 339.8Z" fill="#6b6b6b"/><g transform="translate(41,315)"><circle cx="8" cy="17.4" r="8.6" fill="url(#gSph)" stroke="#111" stroke-width="1.3"/><circle cx="17.8" cy="8.1" r="8.6" fill="url(#gSph)" stroke="#111" stroke-width="1.3"/><path d="M9.5 8.9C5 12 5 22 9 26M0 17.5H16.5M19 -0.5C14 3 14 13 19 16.5M9.5 8.3H26" fill="none" stroke="#223" stroke-width="0.8"/></g><path d="M65.39999999999999 345.6L71.6 345.6L71.6 339.8Z" fill="#6b6b6b"/><g transform="translate(76,315)"><ellipse cx="12.8" cy="2.9" rx="6.8" ry="3.2" fill="none" stroke="#111" stroke-width="1.2"/><path d="M0.3 9.5C8 13 17 13 25 9.5V22.5C17 26 8 26 0.3 22.5Z" fill="url(#gBlueV)" stroke="#111" stroke-width="1.3"/><ellipse cx="12.8" cy="19.5" rx="6.5" ry="2.6" fill="none" stroke="#fff" stroke-width="1.6"/></g><path d="M100.39999999999999 345.6L106.6 345.6L106.6 339.8Z" fill="#6b6b6b"/><g transform="translate(111,315)"><path d="M11.8 0.8L26.8 6.5C24 10 20 14 14.4 24.6L-0.5 19.4C4 16 8 6 11.8 0.8Z" fill="url(#gBlue)" stroke="#111" stroke-width="1.3"/><path d="M19.3 3.6C16 10 12 17 7 22M5.5 10C10 11 16 13 20.5 15.5M4 14C10 15 15 17 18 19" fill="none" stroke="#223" stroke-width="0.8"/></g><path d="M135.4 345.6L141.6 345.6L141.6 339.8Z" fill="#6b6b6b"/><g transform="translate(6,350)"><path d="M4 4.5L8 1L10 3L12.5 0.5L15 3L13 5L16.5 8.5L12.5 12L14 14L10 17.5L8 15.5L5.5 18L3 15.5L5 13.5L1.5 10L5.5 6.5Z" fill="#f5a800" stroke="#111" stroke-width="1.1"/><path d="M12 10L16 6.5L18 8.5L20.5 6L23 8.5L21 10.5L24.5 14L20.5 17.5L22 19.5L18 23L16 21L13.5 23.5L11 21L13 19L9.5 15.5L13.5 12Z" fill="#fff" stroke="#111" stroke-width="1.1"/></g><path d="M30.400000000000002 380.6L36.6 380.6L36.6 374.8Z" fill="#6b6b6b"/><g transform="translate(41,350)"><path d="M-0.7 26.2V12.3L3.9 2L4.9 17.5L21.5 1.5L13.7 20L26.6 19.5L15.3 23.5L16 26.2Z" fill="url(#gOrange)" stroke="#111" stroke-width="1.1" stroke-linejoin="round"/></g><g transform="translate(76,350)"><rect x="-0.5" y="12.3" width="13.3" height="6" fill="#fff" stroke="#111" stroke-width="1.2"/><path d="M12.3 2H20L12.3 18.5Z" fill="#13287a"/><path d="M14.5 15L20 20.5L16.5 24.5L11 19Z" fill="#fff" stroke="#111" stroke-width="1.2"/></g><g transform="translate(111,350)"><rect x="1" y="14.9" width="22.7" height="6.7" fill="#fff" stroke="#111" stroke-width="1.2"/><path d="M12.9 4H21.7L13.4 21.6Z" fill="#13287a"/></g><g transform="translate(6,385)"><g stroke="#000" stroke-width="2.4"><circle cx="13.1" cy="8.3" r="5.4"/><circle cx="8.5" cy="16" r="5.6"/><circle cx="18.3" cy="16.5" r="5.6"/></g><circle cx="13.1" cy="8.3" r="5" fill="#6a86ee"/><circle cx="8.5" cy="16" r="5" fill="#fff"/><circle cx="18.3" cy="16.5" r="5" fill="#1f3590"/></g><path d="M30.400000000000002 415.6L36.6 415.6L36.6 409.8Z" fill="#6b6b6b"/><g transform="translate(41,385)"><circle cx="13.2" cy="7.7" r="4.5" fill="#6a86ee" stroke="#111" stroke-width="1.1"/><circle cx="6.5" cy="17.6" r="4.5" fill="#fff" stroke="#111" stroke-width="1.1"/><circle cx="19.4" cy="17.6" r="4.5" fill="#1f3590" stroke="#111" stroke-width="1.1"/></g><g transform="translate(76,385)"><path d="M-0.1 8C8 4 19 10 19.5 22" fill="none" stroke="#111" stroke-width="1.8"/><rect x="4.6" y="4.2" width="4" height="4" fill="#fff" stroke="#111" stroke-width="1.2"/><rect x="17.5" y="17.1" width="4" height="4" fill="#fff" stroke="#111" stroke-width="1.2"/></g><g transform="translate(111,385)"><path d="M0 9C9 5 19 11 19.5 24" fill="none" stroke="#111" stroke-width="2.2"/><path d="M0 1.6H8M11 2C17 4 23 9 24.2 16.5M24.2 18V24" fill="none" stroke="#111" stroke-width="0.9" stroke-dasharray="1.5 1.5"/><rect x="7.300000000000001" y="-0.3999999999999999" width="4" height="4" fill="#fff" stroke="#111" stroke-width="1.2"/><rect x="22.2" y="14.5" width="4" height="4" fill="#fff" stroke="#111" stroke-width="1.2"/></g><path d="M135.4 415.6L141.6 415.6L141.6 409.8Z" fill="#6b6b6b"/><g transform="translate(6,420)"><path d="M1.7 0L22.9 3.5L22.7 8.5L15 7.5L13.5 23L17.5 24L17.2 26.3L6.5 24.5L6.8 22L10 22.3L10.5 6.5L2 5.5Z" fill="#6a86ee" stroke="#111" stroke-width="1.2" stroke-linejoin="round"/></g><g transform="translate(41,420)"><rect x="2.4" y="16" width="7.2" height="7.7" fill="url(#gWhite)" stroke="#111" stroke-width="1.3"/><rect x="17.3" y="1" width="7.7" height="7.2" fill="url(#gBlue)" stroke="#111" stroke-width="1.3"/><path d="M9.6 16L16 9.5M12.5 9.5H16V13" fill="none" stroke="#111" stroke-width="1.1"/></g><path d="M65.39999999999999 450.6L71.6 450.6L71.6 444.8Z" fill="#6b6b6b"/><g transform="translate(76,420)"><rect x="2.5" y="1" width="7.2" height="7.2" fill="url(#gBlue)" stroke="#111" stroke-width="1.3"/><rect x="17.4" y="4.6" width="7.2" height="7.2" fill="url(#gBlue)" stroke="#111" stroke-width="1.3"/><rect x="12.8" y="8.7" width="6.7" height="7.3" fill="url(#gBlue)" stroke="#111" stroke-width="1.3"/><rect x="2.5" y="16" width="7.2" height="7.2" fill="url(#gWhite)" stroke="#111" stroke-width="1.3"/><rect x="17.4" y="18.6" width="7.2" height="7.7" fill="url(#gBlue)" stroke="#111" stroke-width="1.3"/></g><g transform="translate(111,420)"><rect x="-0.5" y="0.5" width="7.2" height="18" fill="url(#gWhite)" stroke="#111" stroke-width="1.2"/><path d="M9.3 20.6L26.3 11.3L23 7L6.5 16.5Z" fill="url(#gBlue)" stroke="#111" stroke-width="1.2"/><path d="M6.7 2.5C11 2 15 4 17 7.5M14.5 6.5L17 7.5L17.5 5" fill="none" stroke="#111" stroke-width="1"/></g><g transform="translate(6,455)"><path d="M2.3 7.3L13.6 1.1L24 5L24 19L14 25.4L2.3 20.5Z" fill="#5a7cf0" stroke="#111" stroke-width="1.3"/><path d="M2.3 7.3L14 11L24 5L13.6 1.1Z" fill="#b8c6ff"/><path d="M14 11L24 5L24 19L14 25.4Z" fill="#3553c9"/><path d="M8 16L14 18.5V25.4L8 23Z" fill="#fff" stroke="#111" stroke-width="1"/><path d="M14 18.5L18 16V23L14 25.4Z" fill="#ddd" stroke="#111" stroke-width="1"/><path d="M2.3 7.3L13.6 1.1L24 5L24 19L14 25.4L2.3 20.5Z" fill="none" stroke="#111" stroke-width="1.3"/></g><path d="M30.400000000000002 485.6L36.6 485.6L36.6 479.8Z" fill="#6b6b6b"/><g transform="translate(41,455)"><path d="M-0.2 21.2L5.5 14.5H26.6L21 21.2Z" fill="#7a96f4" stroke="#111" stroke-width="1.2"/><g stroke="#9a9a9a" stroke-width="1.8"><path d="M5.5 17V5M12.7 17V5M20.4 17V5"/></g><g fill="#9a9a9a"><path d="M2.8 6L5.5 2L8.2 6Z"/><path d="M10 6L12.7 2L15.4 6Z"/><path d="M17.7 6L20.4 2L23.1 6Z"/></g></g><path d="M65.39999999999999 485.6L71.6 485.6L71.6 479.8Z" fill="#6b6b6b"/><g transform="translate(76,455)"><rect x="0.9" y="0.6" width="5.5" height="5.5" fill="#7a96f4" stroke="#111" stroke-width="1.6"/><rect x="9.7" y="0.6" width="5.5" height="5.5" fill="#7a96f4" stroke="#111" stroke-width="1.6"/><rect x="18.5" y="0.6" width="5.5" height="5.5" fill="#7a96f4" stroke="#111" stroke-width="1.6"/><rect x="0.9" y="9.4" width="5.5" height="5.5" fill="#7a96f4" stroke="#111" stroke-width="1.6"/><rect x="9.7" y="9.4" width="5.5" height="5.5" fill="#7a96f4" stroke="#111" stroke-width="1.6"/><rect x="18.5" y="9.4" width="5.5" height="5.5" fill="#7a96f4" stroke="#111" stroke-width="1.6"/><rect x="0.9" y="18.1" width="5.5" height="5.5" fill="#fff" stroke="#111" stroke-width="1.6"/><rect x="9.7" y="18.1" width="5.5" height="5.5" fill="#7a96f4" stroke="#111" stroke-width="1.6"/><rect x="18.5" y="18.1" width="5.5" height="5.5" fill="#7a96f4" stroke="#111" stroke-width="1.6"/></g><path d="M100.39999999999999 485.6L106.6 485.6L106.6 479.8Z" fill="#6b6b6b"/><g transform="translate(111,455)"><rect x="7.2" y="0.6" width="11.4" height="6.7" fill="url(#gWhite)" stroke="#111" stroke-width="1.3"/><rect x="9.8" y="9.9" width="6.7" height="4.6" fill="url(#gWhite)" stroke="#111" stroke-width="1.3"/><rect x="8.2" y="17.6" width="9.3" height="7.2" fill="url(#gWhite)" stroke="#111" stroke-width="1.3"/><path d="M12.9 -0.4V26.4" stroke="#d42020" stroke-width="1.4"/></g><path d="M135.4 485.6L141.6 485.6L141.6 479.8Z" fill="#6b6b6b"/><g transform="translate(6,490)"><path d="M2.3 5L8 3L11 5V22L5 21L2.3 19Z" fill="url(#gWhite)" stroke="#111" stroke-width="1.2"/><path d="M11 3.5L14.5 0.5L17 3" fill="#fff" stroke="#111" stroke-width="1"/><path d="M15.5 5L22 2.5L24 6L16.5 25L13 24L9 21.5Z" fill="url(#gBlue)" stroke="#111" stroke-width="1.2"/></g><path d="M30.400000000000002 520.6L36.6 520.6L36.6 514.8000000000001Z" fill="#6b6b6b"/><g transform="translate(41,490)"><rect x="7.5" y="-0.2" width="4" height="26" fill="#7a96f4" stroke="#111" stroke-width="1.2"/><circle cx="2.5" cy="6.5" r="2" fill="#111"/><circle cx="20" cy="6.5" r="2" fill="#111"/><path d="M1.5 9.5L2.5 17H7M3 25.5H7.5V19M11.5 12L18 11L22.5 16L20 20.5L25 26" fill="none" stroke="#111" stroke-width="2"/></g><path d="M65.39999999999999 520.6L71.6 520.6L71.6 514.8000000000001Z" fill="#6b6b6b"/><g transform="translate(76,490)"><path d="M0.9 15.3L4 13.5L6.6 18.5C11 11 17 5 24.6 1.4C17 8 11 15 6.6 24Z" fill="#111"/></g><path d="M100.39999999999999 520.6L106.6 520.6L106.6 514.8000000000001Z" fill="#6b6b6b"/><g transform="translate(111,490)"><path d="M0.5 9.5L6 7.5L16 9.5V18.5L10 21L0.5 19Z" fill="#cfcfcf" stroke="#111" stroke-width="1.1"/><path d="M0.5 9.5L6 7.5L16 9.5L10.5 11.5Z" fill="#f0f0f0" stroke="#111" stroke-width="1"/><path d="M10.5 11.5V21L16 18.5V9.5Z" fill="#9a9a9a" stroke="#111" stroke-width="1"/><path d="M18.6 5L12.4 20.7C13 22.5 24 23 25.3 20.7Z" fill="url(#gGray)" stroke="#111" stroke-width="1.1"/></g><path d="M135.4 520.6L141.6 520.6L141.6 514.8000000000001Z" fill="#6b6b6b"/><g transform="translate(6,525)"><path d="M2.3 20L12.1 9.7L22.9 19.5L14.6 26.2Z" fill="#f0cc60" stroke="#111" stroke-width="1.2" stroke-linejoin="round"/><path d="M12.1 9.7L22.9 19.5L14.6 26.2Z" fill="#c9a030"/><path d="M2.3 20L12.1 9.7L22.9 19.5L14.6 26.2Z" fill="none" stroke="#111" stroke-width="1.2" stroke-linejoin="round"/><path d="M9.5 7C11 4 14 1.5 18 1.5L24 2V7L19 8.2L12 8Z" fill="#fff" stroke="#111" stroke-width="1"/><rect x="24" y="-0.5" width="3" height="8" fill="#111"/><path d="M10.5 7.5L14 3M12.5 8L16 3.5M15 8L18 4" stroke="#777" stroke-width="0.6"/></g><path d="M30.400000000000002 555.6L36.6 555.6L36.6 549.8000000000001Z" fill="#6b6b6b"/><path d="M21.5 153.5H36L40 157.5V178.5H21.5Z" fill="url(#gWhite)" stroke="#111" stroke-width="1.6" stroke-linejoin="round"/><path d="M35.5 153.5V158H40" fill="#fff" stroke="#111" stroke-width="0.9"/><path d="M53 160.5L56 158.5H62L64 160.5H71L72 165V176.5H53Z" fill="#ffe072" stroke="#111" stroke-width="1.3"/><path d="M52.5 176.5L57 166H78L73.5 176.5Z" fill="url(#gFold)" stroke="#111" stroke-width="1.3" stroke-linejoin="round"/><rect x="88.6" y="153.6" width="25" height="24.8" rx="2" fill="#c8b66a" stroke="#111" stroke-width="1.8"/><rect x="92" y="155" width="18" height="9.5" fill="url(#gWhite)"/><rect x="94" y="169" width="13.5" height="9" fill="#8a8a80" stroke="#222" stroke-width="0.8"/><rect x="96" y="170.5" width="2.5" height="6.5" fill="#b8a550"/><path d="M112.8 184L119 184L119 178.2Z" fill="#6b6b6b"/><path d="M127 166L128 158L131 154.8H145.5L143 166Z" fill="#fff" stroke="#111" stroke-width="1.3"/><rect x="133" y="158" width="4" height="4" fill="#bbb"/><path d="M123.5 167H146L148.5 170V178L146 178.5H124.5L123.5 177Z" fill="#c4c4c4" stroke="#111" stroke-width="1.3"/><path d="M124 172.5H148" stroke="#111" stroke-width="1.3"/><path d="M159.5 155.5H173L175.5 160V175L171.5 179.5H159.5Z" fill="url(#gWhite)" stroke="#111" stroke-width="1.5"/><path d="M171.5 179.5V175H175.5" fill="#fff" stroke="#111" stroke-width="0.9"/><path d="M167 160L172 154H183L184.5 158.5L178 161L170 162Z" fill="#fff" stroke="#111" stroke-width="1"/><rect x="182.5" y="152.5" width="2.5" height="7.5" fill="#111"/><path d="M168 160L172 156M170 161L174 156.5M172.5 161L176 157" stroke="#777" stroke-width="0.6"/><path d="M198.5 155.5L210 172M214 155.5L202.5 172" stroke="#111" stroke-width="1.6"/><ellipse cx="199.5" cy="174.2" rx="2.4" ry="3.2" transform="rotate(35 199.5 174.2)" fill="none" stroke="#1a2a7a" stroke-width="1.2"/><ellipse cx="212.3" cy="174.2" rx="2.4" ry="3.2" transform="rotate(-35 212.3 174.2)" fill="none" stroke="#1a2a7a" stroke-width="1.2"/><path d="M231.5 154H240L244 158.5V171H231.5Z" fill="#fff" stroke="#111" stroke-width="1.2"/><path d="M236.5 160H244.5L249.3 164.5V178H236.5Z" fill="url(#gWhite)" stroke="#111" stroke-width="1.4"/><rect x="267.6" y="156.5" width="16.6" height="21.2" rx="2.5" fill="#ffd86a" stroke="#111" stroke-width="1.5"/><rect x="272" y="154.8" width="8" height="4.2" rx="1" fill="#fff" stroke="#111" stroke-width="1.3"/><path d="M305 166C309 160 317 159 322 164" fill="none" stroke="#444" stroke-width="3"/><path d="M298.8 169.6L302 158.8L308.5 166.5Z" fill="#111"/><path d="M322.8 184L329 184L329 178.2Z" fill="#6b6b6b"/><path d="M339 178.5C336 172 333 169 334.5 166.5C336 164.5 338 166 340.5 168.5V156.5C340.5 154.5 343 154.5 343 156.5V166V154C343 152 346 152 346 154V166V154.5C346 152.8 349 152.8 349 154.5V166V157C349 155.3 352 155.3 352 157V170C352 174 351 176 350.5 178.5" fill="#fff" stroke="#111" stroke-width="1.1" stroke-linejoin="round"/><ellipse cx="381" cy="165.5" rx="13.5" ry="3.8" fill="none" stroke="#333" stroke-width="1"/><ellipse cx="380.8" cy="165.8" rx="3.5" ry="13.3" fill="none" stroke="#333" stroke-width="1"/><path d="M381 178V159M375 169H384" stroke="#111" stroke-width="1.3"/><path d="M378.5 160.5L381 155.5L383.5 160.5Z M375.5 166.5L371.5 169L375.5 171.5Z" fill="#111"/><circle cx="419.2" cy="162.6" r="7.8" fill="#f0f0f0" stroke="#111" stroke-width="1.5"/><path d="M413.5 168.5L405.5 176.5" stroke="#111" stroke-width="2.8"/><path d="M416 160.5H422.5M419.2 157.5V163.5M416 165.5H422.5" stroke="#111" stroke-width="1"/><path d="M445 165V154H464.5V170.5H456" fill="none" stroke="#333" stroke-width="1.4" stroke-dasharray="2 1.6"/><circle cx="450.1" cy="166.3" r="7.5" fill="#f0f0f0" stroke="#111" stroke-width="1.5"/><path d="M444.5 172.5L439.5 177.5" stroke="#111" stroke-width="2.8"/><path d="M473.5 153.8H479.5L473.5 159.5Z M498.3 153.8H492.3L498.3 159.5Z M473.5 178H479.5L473.5 172.3Z M498.3 178H492.3L498.3 172.3Z" fill="#111"/><circle cx="487.7" cy="164" r="7.8" fill="#f0f0f0" stroke="#111" stroke-width="1.5"/><path d="M482 170L476 176" stroke="#111" stroke-width="2.8"/><circle cx="523.4" cy="164.5" r="8.8" fill="#f4f4f4" stroke="#111" stroke-width="1.5"/><circle cx="525.5" cy="161.5" r="3.6" fill="#f2e020"/><circle cx="521" cy="166.5" r="3.4" fill="#f2e020"/><path d="M517 171L510.5 177.5" stroke="#111" stroke-width="2.8"/><path d="M548 161C552 155 563 153.5 568 160" fill="none" stroke="#444" stroke-width="3"/><path d="M543.6 165L546.5 154.8L553.5 161.5Z" fill="#111"/><circle cx="557.2" cy="169.6" r="5.8" fill="#f0f0f0" stroke="#111" stroke-width="1.5"/><path d="M553 174L547.5 179.5" stroke="#111" stroke-width="2.6"/><path d="M567.8 183.7L574 183.7L574 177.89999999999998Z" fill="#6b6b6b"/><rect x="577.8" y="154" width="25" height="22.4" fill="#c8c8c8" stroke="#111" stroke-width="1.6"/><path d="M590.3 154V176.4M577.8 165.2H602.8" stroke="#111" stroke-width="1.6"/><rect x="591" y="154.7" width="3" height="1" fill="#2030a0"/><path d="M602.8 183.7L609 183.7L609 177.89999999999998Z" fill="#6b6b6b"/><path d="M614 167.5C614 164 617 163 620 162.5L622 159.7H631L633.5 163.5L636.5 165V169.5H614Z" fill="#e01a1a" stroke="#9a0a0a" stroke-width="0.5"/><rect x="625" y="160.7" width="5" height="2.5" fill="#fff"/><circle cx="618.5" cy="169.5" r="2" fill="#111"/><circle cx="632.5" cy="169.5" r="2" fill="#111"/><path d="M612.5 171.5H640" stroke="#888" stroke-width="0.7"/><path d="M637.8 183.7L644 183.7L644 177.89999999999998Z" fill="#6b6b6b"/><path d="M647 170.7L658 159.7V175.4Z M650.5 167.2L658 168.5M654 163.5L658 164.5M651.5 172L653 164.5M655 173.5L656 162" stroke="#555" stroke-width="0.7" fill="none"/><path d="M736 154.5H741V157M764 157C764 153.5 770 153.5 770 157M799 155.5V157M826 155.5V157M866 157C866 152.5 875 152.5 875 157M903 155.5V157M980 157L985 153.5L989 157M1013 157L1021 154.5M1068 154H1075V157M1108 157C1109 152 1120 152 1121 157M1147 157C1148 153.5 1155 153.5 1156 157" fill="none" stroke="#333" stroke-width="1.3"/><path d="M927 153H955" stroke="#444" stroke-width="1.2" stroke-dasharray="1 1"/><path d="M1642.5 232V241M1642 241L1651 244V248L1646 250L1642 248" fill="none" stroke="#111" stroke-width="1.3"/><path d="M1642 243L1650 245V247L1642 245Z" fill="#6a86ee"/><path d="M1661.5 231.5L1676.5 246.5M1676.5 231.5L1661.5 246.5" stroke="#c4c4c4" stroke-width="2.4"/><path d="M1661.5 231.5L1676.5 246.5M1676.5 231.5L1661.5 246.5" stroke="#eee" stroke-width="0.8"/><path d="M1691 245C1685 241 1686 232 1693 231C1697 230.5 1699.5 232 1700 234" fill="none" stroke="#bbb" stroke-width="1.2"/><path d="M1690.5 235.5L1704.5 237V245L1699 248L1693 246.5Z" fill="#ddd" stroke="#bbb" stroke-width="1.1"/><path d="M1716.5 242.5L1724 232.8L1731.5 242.5Z" fill="url(#gBlueV)" stroke="#111c50" stroke-width="1.4" stroke-linejoin="round"/><path d="M1744 234.3H1759.5L1751.8 243.8Z" fill="url(#gBlueV)" stroke="#111c50" stroke-width="1.4" stroke-linejoin="round"/><path d="M1783.5 230.5V247L1772.5 238.8Z" fill="#ddd" stroke="#bbb" stroke-width="1.1" stroke-linejoin="round"/><path d="M1798.5 231.5C1798.5 229.8 1813.5 229.8 1813.5 231.5L1807.5 239.5V246.5C1807.5 248 1804.5 248 1804.5 246.5V239.5Z" fill="#5a7ff0" stroke="#111c50" stroke-width="1.3" stroke-linejoin="round"/><path d="M1803 233L1806 246" stroke="#9ab0ff" stroke-width="1"/><rect x="1826.8" y="230.5" width="14" height="17" fill="#fff" stroke="#333" stroke-width="1"/><path d="M1826.8 232.3H1840.8" stroke="#333" stroke-width="1.6"/><path d="M1831.5 230.5V247.5M1836.2 230.5V247.5M1826.8 236.5H1840.8M1826.8 242H1840.8" stroke="#333" stroke-width="0.9"/><path d="M1855.5 232.6H1868.8M1855.5 239H1868.8M1855.5 245.4H1868.8" stroke="#111" stroke-width="2.3" stroke-linecap="round"/><path d="M1896.5 233L1911.5 236L1911 244L1904 248.5L1897 240Z" fill="#c02020" stroke="#111" stroke-width="1.2" stroke-linejoin="round"/><path d="M1896.5 233L1911.5 236L1904 242Z" fill="#ff8040"/><path d="M1897 240L1904 244.5L1911 240.5V243.5L1904 248.5L1897 240Z" fill="#3050c0"/><path d="M1897.5 236.5L1904 241.5L1911 239" fill="none" stroke="#fff" stroke-width="1"/><path d="M1904.00 278.70A6.3 6.3 0 0 1 1908.67 280.77" fill="none" stroke="#ff2020" stroke-width="3.2"/><path d="M1908.45 280.55A6.3 6.3 0 0 1 1910.29 285.31" fill="none" stroke="#ffb000" stroke-width="3.2"/><path d="M1910.30 285.00A6.3 6.3 0 0 1 1908.23 289.67" fill="none" stroke="#e8f000" stroke-width="3.2"/><path d="M1908.45 289.45A6.3 6.3 0 0 1 1903.69 291.29" fill="none" stroke="#20d040" stroke-width="3.2"/><path d="M1904.00 291.30A6.3 6.3 0 0 1 1899.33 289.23" fill="none" stroke="#20c0ff" stroke-width="3.2"/><path d="M1899.55 289.45A6.3 6.3 0 0 1 1897.71 284.69" fill="none" stroke="#3040ff" stroke-width="3.2"/><path d="M1897.70 285.00A6.3 6.3 0 0 1 1899.77 280.33" fill="none" stroke="#c020f0" stroke-width="3.2"/><path d="M1899.55 280.55A6.3 6.3 0 0 1 1904.31 278.71" fill="none" stroke="#ff2080" stroke-width="3.2"/><circle cx="1904" cy="285" r="8" fill="none" stroke="#222" stroke-width="0.8"/><circle cx="1904" cy="285" r="4.6" fill="none" stroke="#222" stroke-width="0.8"/><rect x="1895" y="320.7" width="17.8" height="14.5" rx="1" fill="url(#gGray)" stroke="#111" stroke-width="1.6"/><path d="M1900.5 338.5H1907.5L1906 335.5H1902Z" fill="#111"/><rect x="1895" y="366.2" width="17.8" height="16.8" fill="#3e62e0" stroke="#111" stroke-width="1"/><rect x="1895.5" y="367" width="17" height="2.5" fill="#fff"/><path d="M1901.2 373.5C1901.2 370 1907.5 370 1907.5 373.5C1907.5 376 1904.5 376 1904.3 378.5" fill="none" stroke="#fff" stroke-width="1.6"/><circle cx="1904.3" cy="380.5" r="0.9" fill="#fff"/><path d="M1895.5 415.5H1899.5L1901 412.5H1907L1908.5 415.5H1912.5V426.5H1895.5Z" fill="#333" stroke="#111" stroke-width="1"/><circle cx="1904.5" cy="420.5" r="4" fill="#1a3a50" stroke="#aaa" stroke-width="0.8"/><rect x="1895.5" y="456" width="17" height="16.5" fill="#ddd" stroke="#333" stroke-width="1"/><path d="M1895.5 460H1912.5M1895.5 464H1912.5M1895.5 468H1912.5M1899.5 456V472.5M1903.5 456V472.5M1907.5 456V472.5" stroke="#888" stroke-width="0.6"/><path d="M1899.5 464.5V456.5" stroke="#18b018" stroke-width="1.2"/><path d="M1899.5 464.5H1911" stroke="#e02020" stroke-width="1.2"/></svg>
<!-- /ICONS -->

<!-- ===== DIALOG ===== -->
<div class="a" id="dlg" style="left:658px;top:155px;width:984px;height:742px;background:#e9eaee;border:1px solid #b9c3d6;border-radius:8px;box-shadow:0 18px 60px rgba(0,0,0,0.42)"></div>
<!-- DLG -->
<div id="dlgc" style="color:#262626">
<div class="t" style="left:694.5px;top:167.73px;font-size:14.5px;color:#333;transform:scaleX(1.0196);transform-origin:0 0">Print</div>
<div class="a" style="left:1488px;top:173px;width:12.5px;height:1.2px;background:#111"></div>
<div class="a" style="left:1546.3px;top:168.3px;width:11.5px;height:11.5px;border:1.3px solid #111;border-radius:2px"></div>
<svg style="left:1605px;top:168px" width="12.5" height="12.5"><path d="M0 0L12.5 12.5M12.5 0L0 12.5" stroke="#111" stroke-width="1.2"/></svg>
<svg style="left:676px;top:215px" width="10" height="6"><path d="M0.7 0.7L5 5L9.3 0.7" fill="none" stroke="#333" stroke-width="1.5"/></svg>
<div class="t" style="left:694.5px;top:210.19px;font-size:17.5px">Destination</div>
<div class="a" style="left:786px;top:218px;width:373px;height:1px;background:#dde0e7"></div>
<div class="a" style="left:696px;top:239px;width:463px;height:27px;background:#fff;border:1px solid #c3c9d6"></div>
<div class="t" style="left:721.7px;top:245.07px;font-size:14.8px;transform:scaleX(0.9284);transform-origin:0 0">Rhino PDF</div>
<svg style="left:1143px;top:249px" width="9" height="6"><path d="M0.5 0.5L4.5 4.5L8.5 0.5" fill="none" stroke="#333" stroke-width="1.4"/></svg>
<div class="t" style="left:696.3px;top:286.07px;font-size:14.8px;transform:scaleX(0.8966);transform-origin:0 0">Size:</div>
<div class="a" style="left:739px;top:280px;width:420px;height:26px;background:#fff;border:1px solid #c3c9d6"></div>
<div class="t" style="left:743.9px;top:286.07px;font-size:14.8px">A4 (210mm x 297mm)</div>
<svg style="left:1143px;top:289px" width="9" height="6"><path d="M0.5 0.5L4.5 4.5L8.5 0.5" fill="none" stroke="#333" stroke-width="1.4"/></svg>
<div class="a" style="left:740px;top:312.5px;width:15.6px;height:14px;background:#fff;border:1px solid #c3c6ce"></div>
<div class="t" style="left:762.5px;top:312.77px;font-size:14.8px;transform:scaleX(0.9423);transform-origin:0 0">Use Layout Page Size</div>
<div class="t" style="left:696.3px;top:352.77px;font-size:14.8px;transform:scaleX(0.9764);transform-origin:0 0">Resolution:</div>
<div class="a" style="left:782px;top:346.5px;width:125px;height:26px;background:#fff;border:1px solid #c3c9d6"></div>
<div class="a" style="left:891px;top:347px;width:1px;height:25px;background:#c3c9d6"></div>
<div class="a" style="left:892px;top:359px;width:14px;height:1px;background:#dde0e7"></div>
<div class="t" style="left:787.5px;top:352.97px;font-size:14.8px;transform:scaleX(0.9180);transform-origin:0 0">300.0</div>
<svg style="left:894px;top:350px" width="10" height="20"><path d="M1.4 5.7L5 1.7L8.6 5.7Z M1.4 13.8L5 18.4L8.6 13.8Z" fill="#222"/></svg>
<div class="a" style="left:919px;top:346.5px;width:240px;height:26px;background:#fff;border:1px solid #c3c9d6"></div>
<div class="t" style="left:924.2px;top:352.97px;font-size:14.8px;transform:scaleX(1.0258);transform-origin:0 0">dots / inch</div>
<svg style="left:1143px;top:357px" width="9" height="6"><path d="M0.5 0.5L4.5 4.5L8.5 0.5" fill="none" stroke="#333" stroke-width="1.4"/></svg>
<div class="t" style="left:696.3px;top:388.47px;font-size:14.8px;transform:scaleX(1.0156);transform-origin:0 0">Orientation:</div>
<div class="a" style="left:722.2px;top:409.5px;width:14.6px;height:14.6px;border-radius:50%;background:#fff;border:1px solid #c5c8d0"></div>
<div class="a" style="left:726.0px;top:413.3px;width:7px;height:7px;border-radius:50%;background:#262626"></div>
<div class="t" style="left:745.4px;top:409.47px;font-size:14.8px">Portrait</div>
<div class="a" style="left:722.2px;top:428.4px;width:14.6px;height:14.6px;border-radius:50%;background:#fff;border:1px solid #c5c8d0"></div>
<div class="t" style="left:745.4px;top:428.47px;font-size:14.8px;transform:scaleX(0.9569);transform-origin:0 0">Landscape</div>
<div class="t" style="left:696.4px;top:460.47px;font-size:14.8px;transform:scaleX(0.9885);transform-origin:0 0">Output Type:</div>
<div class="a" style="left:722.2px;top:481.2px;width:14.6px;height:14.6px;border-radius:50%;background:#fff;border:1px solid #c5c8d0"></div>
<div class="a" style="left:726.0px;top:485.0px;width:7px;height:7px;border-radius:50%;background:#262626"></div>
<div class="t" style="left:745.6px;top:481.37px;font-size:14.8px">Vector Output</div>
<div class="a" style="left:722.2px;top:502.2px;width:14.6px;height:14.6px;border-radius:50%;background:#fff;border:1px solid #5fb0f5"></div>
<div class="t" style="left:745.6px;top:502.47px;font-size:14.8px;transform:scaleX(0.9812);transform-origin:0 0">Raster Output</div>
<div class="t" style="left:696.4px;top:527.87px;font-size:14.8px">Output Color:</div>
<div class="a" style="left:722.2px;top:549.4000000000001px;width:14.6px;height:14.6px;border-radius:50%;background:#fff;border:1px solid #c5c8d0"></div>
<div class="a" style="left:726.0px;top:553.2px;width:7px;height:7px;border-radius:50%;background:#262626"></div>
<div class="t" style="left:745.6px;top:548.67px;font-size:14.8px">Print Color</div>
<div class="a" style="left:722.2px;top:570.4000000000001px;width:14.6px;height:14.6px;border-radius:50%;background:#fff;border:1px solid #c5c8d0"></div>
<div class="t" style="left:745.6px;top:570.17px;font-size:14.8px">Display Color</div>
<div class="a" style="left:722.2px;top:592.0px;width:14.6px;height:14.6px;border-radius:50%;background:#fff;border:1px solid #c5c8d0"></div>
<div class="t" style="left:745.6px;top:591.47px;font-size:14.8px;transform:scaleX(0.9884);transform-origin:0 0">Black and White</div>
<svg style="left:678.5px;top:629.8px" width="6" height="10"><path d="M0.7 0.7L5 5L0.7 9.3" fill="none" stroke="#666" stroke-width="1.3"/></svg>
<div class="t" style="left:693.5px;top:626.29px;font-size:17.5px;color:#262626">View and Output Scale</div>
<div class="a" style="left:877.8px;top:634.8px;width:281.20000000000005px;height:1px;background:#dde0e7"></div>
<svg style="left:678.5px;top:671.4px" width="6" height="10"><path d="M0.7 0.7L5 5L0.7 9.3" fill="none" stroke="#666" stroke-width="1.3"/></svg>
<div class="t" style="left:693.5px;top:667.89px;font-size:17.5px;color:#262626;transform:scaleX(1.0170);transform-origin:0 0">Margins and Position</div>
<div class="a" style="left:865.7px;top:676.4px;width:293.29999999999995px;height:1px;background:#dde0e7"></div>
<svg style="left:678.5px;top:713.4px" width="6" height="10"><path d="M0.7 0.7L5 5L0.7 9.3" fill="none" stroke="#666" stroke-width="1.3"/></svg>
<div class="t" style="left:693.5px;top:709.89px;font-size:17.5px;color:#262626">Linetypes and Line Widths</div>
<div class="a" style="left:904.3px;top:718.4px;width:254.70000000000005px;height:1px;background:#dde0e7"></div>
<svg style="left:678.5px;top:754.7px" width="6" height="10"><path d="M0.7 0.7L5 5L0.7 9.3" fill="none" stroke="#666" stroke-width="1.3"/></svg>
<div class="t" style="left:693.5px;top:751.19px;font-size:17.5px;color:#262626;transform:scaleX(1.0176);transform-origin:0 0">Visibility</div>
<div class="a" style="left:763.5px;top:759.7px;width:395.5px;height:1px;background:#dde0e7"></div>
<div class="a" style="left:1183px;top:229px;width:445px;height:613px;background:#efefef"></div>
<div class="a" style="left:1192.5px;top:234px;width:427px;height:604px;background:#fff;border:2px solid #707070"></div>
<svg style="left:0px;top:0px" width="1917" height="1017"><path d="M1360 532H1427V560H1360Z" fill="none" stroke="#4d6bff" stroke-width="1.3"/><path d="M1383 560H1427V547 M1399 537V560 M1410 548V560 M1410 541.5H1427 M1394 532H1401 M1410 532H1427" fill="none" stroke="#ff2a10" stroke-width="1.5"/><path d="M1526 545.5L1541 530.5H1563.5V560.5H1541Z" fill="none" stroke="#3ee04a" stroke-width="1.3"/></svg>
<div class="a" style="left:1059px;top:861px;width:16px;height:15px;background:#fff;border:1px solid #c3c6ce"></div>
<div class="t" style="left:1081.7px;top:862.47px;font-size:14.8px;transform:scaleX(0.9844);transform-origin:0 0">Open after saving</div>
<div class="a" style="left:1211px;top:854px;width:100px;height:29px;background:#e9eaee;border:1px solid #4da3f2"></div>
<div class="t" style="left:1246.05px;top:860.97px;font-size:14.8px;transform:scaleX(0.9825);transform-origin:0 0">Print</div>
<div class="a" style="left:1317px;top:854px;width:100px;height:29px;background:#e9eaee;border:1px solid #c4c9d4"></div>
<div class="t" style="left:1349.0px;top:860.97px;font-size:14.8px;transform:scaleX(0.9514);transform-origin:0 0">Close</div>
<div class="a" style="left:1423px;top:854px;width:100px;height:29px;background:#e9eaee;border:1px solid #c4c9d4"></div>
<div class="t" style="left:1450.95px;top:860.97px;font-size:14.8px;transform:scaleX(0.9572);transform-origin:0 0">Cancel</div>
<div class="a" style="left:1529px;top:854px;width:100px;height:29px;background:#e9eaee;border:1px solid #c4c9d4"></div>
<div class="t" style="left:1563.25px;top:860.97px;font-size:14.8px;transform:scaleX(1.0348);transform-origin:0 0">Help</div>
</div>
<!-- /DLG -->

<!-- MISC2 -->
<svg id="misc2" style="left:0;top:0" width="1917" height="1017"><g transform="translate(668,164) scale(1.0)"><rect x="0" y="0" width="20" height="20" fill="#fff"/><path d="M3.3 0H20V9C18.5 11 16.5 12 14 12.6L14.8 11.2C13 10.8 11.5 10 10.5 9C9.5 7 8 3 6.2 1L4.6 0.8Z" fill="#000"/><path d="M3.4 0.3C3.6 3 2.9 5.5 1.3 7.6L2.4 8.1C4.1 6 4.9 3 4.9 0.5Z" fill="#000"/><path d="M0 10C3 12 6 14.5 9 16C10.5 17 11.5 18.5 12 19.5L14 18.7C16 15 18 13 20 10.8V20H0Z" fill="#000"/><path d="M4.1 9.6L4.7 12.4L9.3 12.8" fill="none" stroke="#000" stroke-width="1.1"/><text x="16.4" y="8.4" font-size="9" font-family="Liberation Sans" fill="#c8c8c8" text-anchor="middle">8</text></g><rect x="698.5" y="243.5" width="17" height="17.5" rx="2" fill="#b9a864" stroke="#555" stroke-width="1"/><rect x="701" y="244.5" width="12" height="6.5" fill="#e8e8e8"/><rect x="702" y="254" width="10" height="7" fill="#888" stroke="#444" stroke-width="0.6"/><path d="M1391.5 537.5H1396.5V542M1404 536C1406 538 1404 540 1405 543H1398.5 M1398.5 553H1404V556 M1413 533V538M1418 533V536.5H1420M1411 544.5H1412M1383 560H1390" fill="none" stroke="#ff2a10" stroke-width="1.3"/></svg>
<!-- /MISC2 -->
</body></html>
